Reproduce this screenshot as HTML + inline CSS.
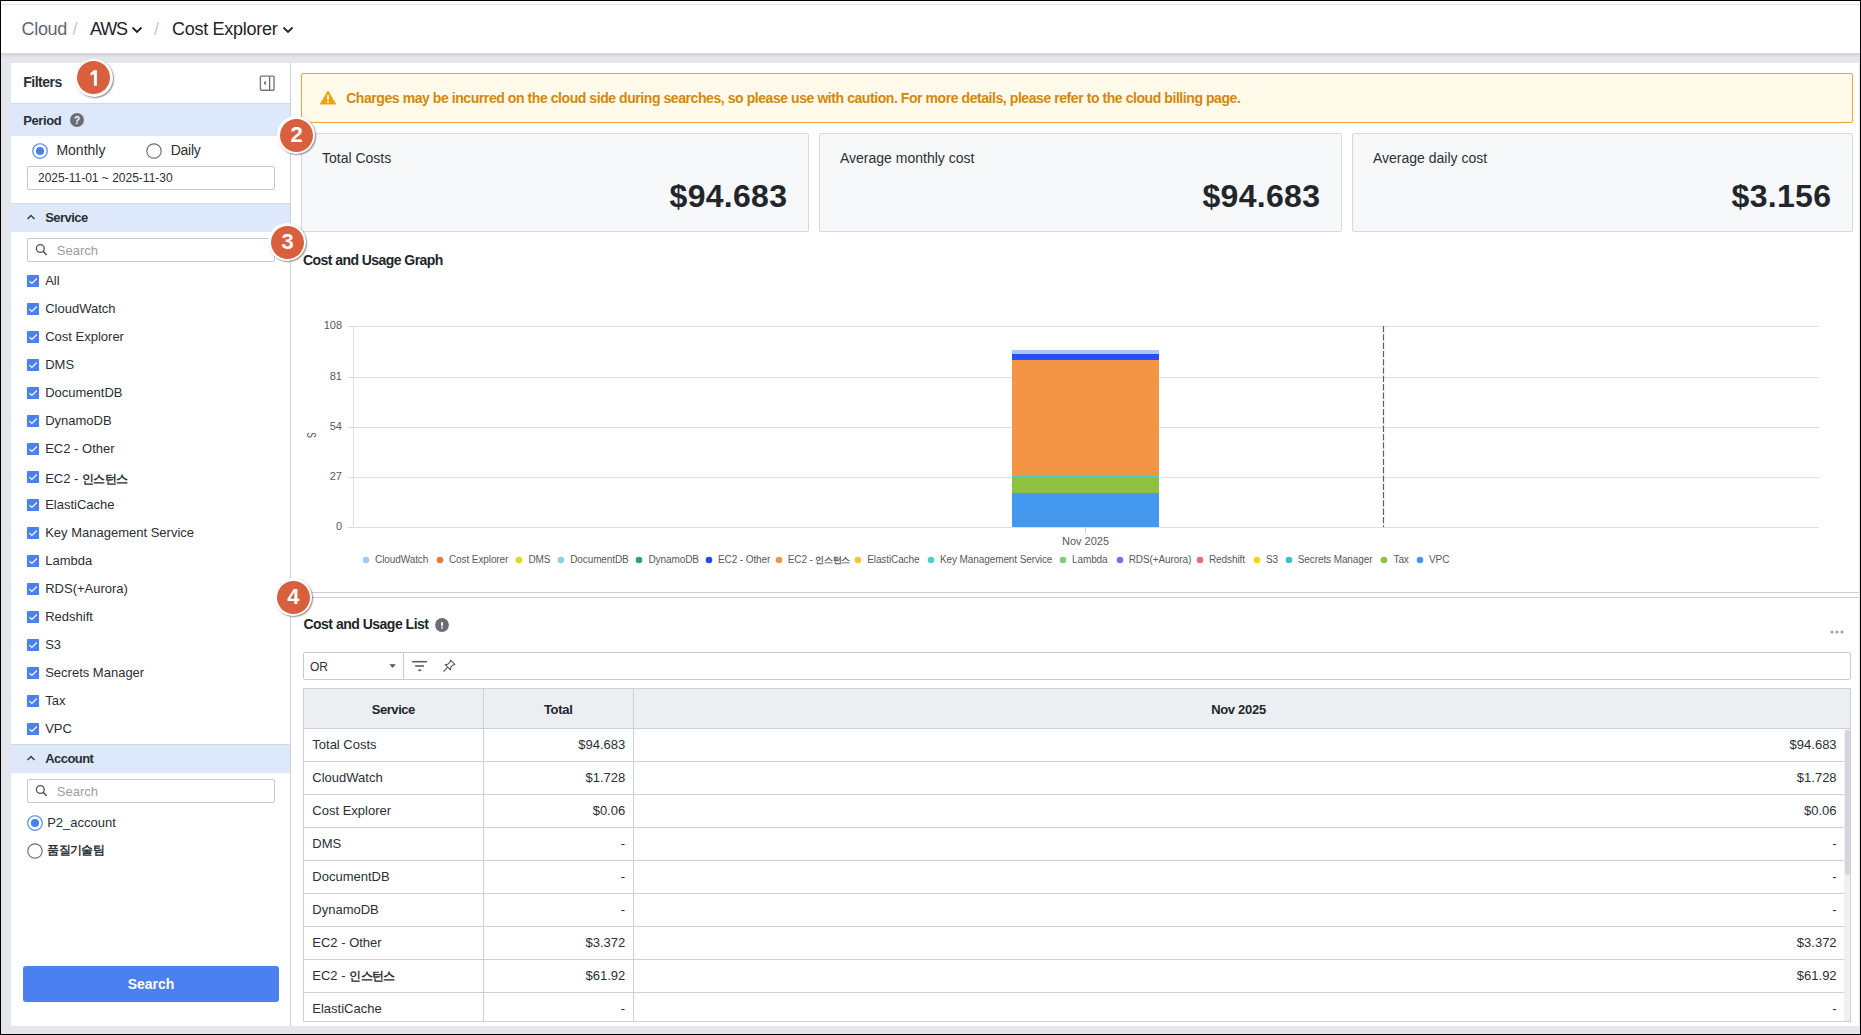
<!DOCTYPE html>
<html><head><meta charset="utf-8"><style>
html,body{margin:0;padding:0;width:1861px;height:1035px;overflow:hidden;background:#e3e6ea;}
body{position:relative;font-family:"Liberation Sans", sans-serif;}
.t{position:absolute;white-space:nowrap;font-family:"Liberation Sans", sans-serif;}
.ko{font-size:11.5px;font-weight:700;letter-spacing:-0.6px;}
svg{display:block;overflow:visible;}
</style></head><body>
<div style="position:absolute;left:0px;top:0px;width:1861px;height:1035px;box-sizing:border-box;background:#e3e6ea;"></div>
<div style="position:absolute;left:1px;top:1px;width:1859px;height:52px;box-sizing:border-box;background:#fff;"></div>
<div style="position:absolute;left:1px;top:4px;width:1859px;height:1px;box-sizing:border-box;background:#e3e5e6;"></div>
<div style="position:absolute;left:1px;top:53px;width:1859px;height:5px;box-sizing:border-box;background:linear-gradient(#cfd3d8,#e3e6ea);"></div>
<div class="t" style="left:21.60px;top:19.56px;font-size:18px;line-height:18px;color:#5f6775;font-weight:400;letter-spacing:-0.35px;">Cloud</div>
<div class="t" style="left:72.50px;top:19.56px;font-size:18px;line-height:18px;color:#c3c8cf;font-weight:400;">/</div>
<div class="t" style="left:90.10px;top:19.56px;font-size:18px;line-height:18px;color:#1f2329;font-weight:400;letter-spacing:-1.2px;">AWS</div>
<svg style="position:absolute;left:131px;top:25.5px;" width="12" height="8" viewBox="0 0 12 8"><path d="M1.5 1.5 L6 6 L10.5 1.5" fill="none" stroke="#1f2329" stroke-width="1.8"/></svg>
<div class="t" style="left:154.00px;top:19.56px;font-size:18px;line-height:18px;color:#c3c8cf;font-weight:400;">/</div>
<div class="t" style="left:172.00px;top:19.56px;font-size:18px;line-height:18px;color:#1f2329;font-weight:400;letter-spacing:-0.28px;">Cost Explorer</div>
<svg style="position:absolute;left:282px;top:25.5px;" width="12" height="8" viewBox="0 0 12 8"><path d="M1.5 1.5 L6 6 L10.5 1.5" fill="none" stroke="#1f2329" stroke-width="1.8"/></svg>
<div style="position:absolute;left:11px;top:63px;width:280px;height:963px;box-sizing:border-box;background:#fff;border-right:1px solid #cfd3d9;"></div>
<div class="t" style="left:23.20px;top:75.45px;font-size:14px;line-height:14px;color:#2b2f36;font-weight:700;letter-spacing:-0.5px;">Filters</div>
<div style="position:absolute;left:11px;top:103px;width:279px;height:1px;box-sizing:border-box;background:#d5d9de;"></div>
<svg style="position:absolute;left:258px;top:74px;" width="18" height="18" viewBox="0 0 18 18"><rect x="2.4" y="2.1" width="13.6" height="14.1" rx="0.9" fill="none" stroke="#737881" stroke-width="1.4"/><line x1="11.6" y1="2.5" x2="11.6" y2="15.8" stroke="#626770" stroke-width="1.3"/><path d="M7.8 6.6 L5.6 9 L7.8 11.4 Z" fill="#5a5f68"/></svg>
<div style="position:absolute;left:11px;top:104px;width:279px;height:32px;box-sizing:border-box;background:#dde8fb;"></div>
<div class="t" style="left:23.20px;top:113.70px;font-size:13px;line-height:13px;color:#2b2f36;font-weight:700;letter-spacing:-0.4px;">Period</div>
<svg style="position:absolute;left:70px;top:113px;" width="14" height="14" viewBox="0 0 14 14"><circle cx="7" cy="7" r="7" fill="#6b6e75"/><text x="7" y="11" text-anchor="middle" font-family="Liberation Sans" font-weight="700" font-size="10" fill="#fff">?</text></svg>
<svg style="position:absolute;left:32px;top:143px;" width="16" height="16" viewBox="0 0 16 16"><circle cx="8" cy="8" r="7.3" fill="#fff" stroke="#4a80f2" stroke-width="1.15"/><circle cx="8" cy="8" r="4.1" fill="#4a80f2"/></svg>
<div class="t" style="left:56.40px;top:143.15px;font-size:14px;line-height:14px;color:#2b2f36;font-weight:400;">Monthly</div>
<svg style="position:absolute;left:145.7px;top:143px;" width="16" height="16" viewBox="0 0 16 16"><circle cx="8" cy="8" r="7.2" fill="#fff" stroke="#6b7078" stroke-width="1.2"/></svg>
<div class="t" style="left:170.80px;top:143.15px;font-size:14px;line-height:14px;color:#2b2f36;font-weight:400;letter-spacing:-0.3px;">Daily</div>
<div style="position:absolute;left:27px;top:166px;width:248px;height:24px;box-sizing:border-box;border:1px solid #c5c9cf;border-radius:2px;background:#fff;"></div>
<div class="t" style="left:38.00px;top:171.74px;font-size:12px;line-height:12px;color:#2b2f36;font-weight:400;">2025-11-01 ~ 2025-11-30</div>
<div style="position:absolute;left:11px;top:203px;width:279px;height:1px;box-sizing:border-box;background:#d5d9de;"></div>
<div style="position:absolute;left:11px;top:204px;width:279px;height:28px;box-sizing:border-box;background:#dde8fb;"></div>
<svg style="position:absolute;left:26px;top:213px;" width="10" height="8" viewBox="0 0 10 8"><path d="M1.5 6 L5 2.5 L8.5 6" fill="none" stroke="#3a3f47" stroke-width="1.5"/></svg>
<div class="t" style="left:45.20px;top:211.30px;font-size:13px;line-height:13px;color:#2b2f36;font-weight:700;letter-spacing:-0.55px;">Service</div>
<div style="position:absolute;left:27px;top:238px;width:248px;height:24px;box-sizing:border-box;border:1px solid #c5c9cf;border-radius:2px;background:#fff;"></div>
<svg style="position:absolute;left:34px;top:243.0px;" width="14" height="14" viewBox="0 0 14 14"><circle cx="6.3" cy="5.5" r="3.9" fill="none" stroke="#50555c" stroke-width="1.35"/><line x1="9.1" y1="8.3" x2="12.6" y2="12" stroke="#50555c" stroke-width="1.6"/></svg>
<div class="t" style="left:56.80px;top:243.60px;font-size:13px;line-height:13px;color:#9a9ea5;font-weight:400;">Search</div>
<svg style="position:absolute;left:27px;top:275px;" width="12" height="12" viewBox="0 0 12 12"><rect x="0" y="0" width="12" height="12" rx="0.4" fill="#4a80f0"/><path d="M2.3 6.1 L4.9 8.5 L9.8 3.5" fill="none" stroke="#fff" stroke-width="1.15"/></svg>
<div class="t" style="left:45.20px;top:274.20px;font-size:13px;line-height:13px;color:#2b2f36;font-weight:400;">All</div>
<svg style="position:absolute;left:27px;top:303px;" width="12" height="12" viewBox="0 0 12 12"><rect x="0" y="0" width="12" height="12" rx="0.4" fill="#4a80f0"/><path d="M2.3 6.1 L4.9 8.5 L9.8 3.5" fill="none" stroke="#fff" stroke-width="1.15"/></svg>
<div class="t" style="left:45.20px;top:302.20px;font-size:13px;line-height:13px;color:#2b2f36;font-weight:400;">CloudWatch</div>
<svg style="position:absolute;left:27px;top:331px;" width="12" height="12" viewBox="0 0 12 12"><rect x="0" y="0" width="12" height="12" rx="0.4" fill="#4a80f0"/><path d="M2.3 6.1 L4.9 8.5 L9.8 3.5" fill="none" stroke="#fff" stroke-width="1.15"/></svg>
<div class="t" style="left:45.20px;top:330.20px;font-size:13px;line-height:13px;color:#2b2f36;font-weight:400;">Cost Explorer</div>
<svg style="position:absolute;left:27px;top:359px;" width="12" height="12" viewBox="0 0 12 12"><rect x="0" y="0" width="12" height="12" rx="0.4" fill="#4a80f0"/><path d="M2.3 6.1 L4.9 8.5 L9.8 3.5" fill="none" stroke="#fff" stroke-width="1.15"/></svg>
<div class="t" style="left:45.20px;top:358.20px;font-size:13px;line-height:13px;color:#2b2f36;font-weight:400;">DMS</div>
<svg style="position:absolute;left:27px;top:387px;" width="12" height="12" viewBox="0 0 12 12"><rect x="0" y="0" width="12" height="12" rx="0.4" fill="#4a80f0"/><path d="M2.3 6.1 L4.9 8.5 L9.8 3.5" fill="none" stroke="#fff" stroke-width="1.15"/></svg>
<div class="t" style="left:45.20px;top:386.20px;font-size:13px;line-height:13px;color:#2b2f36;font-weight:400;">DocumentDB</div>
<svg style="position:absolute;left:27px;top:415px;" width="12" height="12" viewBox="0 0 12 12"><rect x="0" y="0" width="12" height="12" rx="0.4" fill="#4a80f0"/><path d="M2.3 6.1 L4.9 8.5 L9.8 3.5" fill="none" stroke="#fff" stroke-width="1.15"/></svg>
<div class="t" style="left:45.20px;top:414.20px;font-size:13px;line-height:13px;color:#2b2f36;font-weight:400;">DynamoDB</div>
<svg style="position:absolute;left:27px;top:443px;" width="12" height="12" viewBox="0 0 12 12"><rect x="0" y="0" width="12" height="12" rx="0.4" fill="#4a80f0"/><path d="M2.3 6.1 L4.9 8.5 L9.8 3.5" fill="none" stroke="#fff" stroke-width="1.15"/></svg>
<div class="t" style="left:45.20px;top:442.20px;font-size:13px;line-height:13px;color:#2b2f36;font-weight:400;">EC2 - Other</div>
<svg style="position:absolute;left:27px;top:471px;" width="12" height="12" viewBox="0 0 12 12"><rect x="0" y="0" width="12" height="12" rx="0.4" fill="#4a80f0"/><path d="M2.3 6.1 L4.9 8.5 L9.8 3.5" fill="none" stroke="#fff" stroke-width="1.15"/></svg>
<div class="t" style="left:45.20px;top:471.70px;font-size:13px;line-height:13px;color:#2b2f36;font-weight:400;">EC2 - <span class="ko">인스턴스</span></div>
<svg style="position:absolute;left:27px;top:499px;" width="12" height="12" viewBox="0 0 12 12"><rect x="0" y="0" width="12" height="12" rx="0.4" fill="#4a80f0"/><path d="M2.3 6.1 L4.9 8.5 L9.8 3.5" fill="none" stroke="#fff" stroke-width="1.15"/></svg>
<div class="t" style="left:45.20px;top:498.20px;font-size:13px;line-height:13px;color:#2b2f36;font-weight:400;">ElastiCache</div>
<svg style="position:absolute;left:27px;top:527px;" width="12" height="12" viewBox="0 0 12 12"><rect x="0" y="0" width="12" height="12" rx="0.4" fill="#4a80f0"/><path d="M2.3 6.1 L4.9 8.5 L9.8 3.5" fill="none" stroke="#fff" stroke-width="1.15"/></svg>
<div class="t" style="left:45.20px;top:526.20px;font-size:13px;line-height:13px;color:#2b2f36;font-weight:400;">Key Management Service</div>
<svg style="position:absolute;left:27px;top:555px;" width="12" height="12" viewBox="0 0 12 12"><rect x="0" y="0" width="12" height="12" rx="0.4" fill="#4a80f0"/><path d="M2.3 6.1 L4.9 8.5 L9.8 3.5" fill="none" stroke="#fff" stroke-width="1.15"/></svg>
<div class="t" style="left:45.20px;top:554.20px;font-size:13px;line-height:13px;color:#2b2f36;font-weight:400;">Lambda</div>
<svg style="position:absolute;left:27px;top:583px;" width="12" height="12" viewBox="0 0 12 12"><rect x="0" y="0" width="12" height="12" rx="0.4" fill="#4a80f0"/><path d="M2.3 6.1 L4.9 8.5 L9.8 3.5" fill="none" stroke="#fff" stroke-width="1.15"/></svg>
<div class="t" style="left:45.20px;top:582.20px;font-size:13px;line-height:13px;color:#2b2f36;font-weight:400;">RDS(+Aurora)</div>
<svg style="position:absolute;left:27px;top:611px;" width="12" height="12" viewBox="0 0 12 12"><rect x="0" y="0" width="12" height="12" rx="0.4" fill="#4a80f0"/><path d="M2.3 6.1 L4.9 8.5 L9.8 3.5" fill="none" stroke="#fff" stroke-width="1.15"/></svg>
<div class="t" style="left:45.20px;top:610.20px;font-size:13px;line-height:13px;color:#2b2f36;font-weight:400;">Redshift</div>
<svg style="position:absolute;left:27px;top:639px;" width="12" height="12" viewBox="0 0 12 12"><rect x="0" y="0" width="12" height="12" rx="0.4" fill="#4a80f0"/><path d="M2.3 6.1 L4.9 8.5 L9.8 3.5" fill="none" stroke="#fff" stroke-width="1.15"/></svg>
<div class="t" style="left:45.20px;top:638.20px;font-size:13px;line-height:13px;color:#2b2f36;font-weight:400;">S3</div>
<svg style="position:absolute;left:27px;top:667px;" width="12" height="12" viewBox="0 0 12 12"><rect x="0" y="0" width="12" height="12" rx="0.4" fill="#4a80f0"/><path d="M2.3 6.1 L4.9 8.5 L9.8 3.5" fill="none" stroke="#fff" stroke-width="1.15"/></svg>
<div class="t" style="left:45.20px;top:666.20px;font-size:13px;line-height:13px;color:#2b2f36;font-weight:400;">Secrets Manager</div>
<svg style="position:absolute;left:27px;top:695px;" width="12" height="12" viewBox="0 0 12 12"><rect x="0" y="0" width="12" height="12" rx="0.4" fill="#4a80f0"/><path d="M2.3 6.1 L4.9 8.5 L9.8 3.5" fill="none" stroke="#fff" stroke-width="1.15"/></svg>
<div class="t" style="left:45.20px;top:694.20px;font-size:13px;line-height:13px;color:#2b2f36;font-weight:400;">Tax</div>
<svg style="position:absolute;left:27px;top:723px;" width="12" height="12" viewBox="0 0 12 12"><rect x="0" y="0" width="12" height="12" rx="0.4" fill="#4a80f0"/><path d="M2.3 6.1 L4.9 8.5 L9.8 3.5" fill="none" stroke="#fff" stroke-width="1.15"/></svg>
<div class="t" style="left:45.20px;top:722.20px;font-size:13px;line-height:13px;color:#2b2f36;font-weight:400;">VPC</div>
<div style="position:absolute;left:11px;top:744px;width:279px;height:1px;box-sizing:border-box;background:#d5d9de;"></div>
<div style="position:absolute;left:11px;top:745px;width:279px;height:28px;box-sizing:border-box;background:#dde8fb;"></div>
<svg style="position:absolute;left:26px;top:754px;" width="10" height="8" viewBox="0 0 10 8"><path d="M1.5 6 L5 2.5 L8.5 6" fill="none" stroke="#3a3f47" stroke-width="1.5"/></svg>
<div class="t" style="left:45.20px;top:752.10px;font-size:13px;line-height:13px;color:#2b2f36;font-weight:700;letter-spacing:-0.55px;">Account</div>
<div style="position:absolute;left:27px;top:779px;width:248px;height:24px;box-sizing:border-box;border:1px solid #c5c9cf;border-radius:2px;background:#fff;"></div>
<svg style="position:absolute;left:34px;top:784.0px;" width="14" height="14" viewBox="0 0 14 14"><circle cx="6.3" cy="5.5" r="3.9" fill="none" stroke="#50555c" stroke-width="1.35"/><line x1="9.1" y1="8.3" x2="12.6" y2="12" stroke="#50555c" stroke-width="1.6"/></svg>
<div class="t" style="left:56.80px;top:784.60px;font-size:13px;line-height:13px;color:#9a9ea5;font-weight:400;">Search</div>
<svg style="position:absolute;left:27px;top:815px;" width="16" height="16" viewBox="0 0 16 16"><circle cx="8" cy="8" r="7.3" fill="#fff" stroke="#4a80f2" stroke-width="1.15"/><circle cx="8" cy="8" r="4.1" fill="#4a80f2"/></svg>
<div class="t" style="left:47.20px;top:815.80px;font-size:13px;line-height:13px;color:#2b2f36;font-weight:400;">P2_account</div>
<svg style="position:absolute;left:27px;top:843px;" width="16" height="16" viewBox="0 0 16 16"><circle cx="8" cy="8" r="7.2" fill="#fff" stroke="#6b7078" stroke-width="1.2"/></svg>
<div class="t" style="left:47.20px;top:843.00px;font-size:13px;line-height:13px;color:#2b2f36;font-weight:400;"><span class="ko">품질기술팀</span></div>
<div style="position:absolute;left:23px;top:966px;width:256px;height:36px;box-sizing:border-box;background:#4a80f0;border-radius:3px;"></div>
<div class="t" style="left:-449.00px;width:1200px;text-align:center;top:977.15px;font-size:14px;line-height:14px;color:#fff;font-weight:700;">Search</div>
<div style="position:absolute;left:291px;top:63px;width:1568px;height:963px;box-sizing:border-box;background:#fff;"></div>
<div style="position:absolute;left:301px;top:73px;width:1552px;height:50px;box-sizing:border-box;background:#fffaea;border:1px solid #f0a52e;border-radius:2px;"></div>
<svg style="position:absolute;left:320px;top:90px;" width="16" height="15" viewBox="0 0 16 15"><path d="M8 1 L15.5 14 L0.5 14 Z" fill="#f0a010" stroke="#f0a010" stroke-width="1" stroke-linejoin="round"/><rect x="7.1" y="5" width="1.8" height="5" fill="#fff"/><rect x="7.1" y="11" width="1.8" height="1.8" fill="#fff"/></svg>
<div class="t" style="left:346.20px;top:91.45px;font-size:14px;line-height:14px;color:#d4870c;font-weight:700;letter-spacing:-0.43px;">Charges may be incurred on the cloud side during searches, so please use with caution. For more details, please refer to the cloud billing page.</div>
<div style="position:absolute;left:301px;top:133px;width:508px;height:99px;box-sizing:border-box;background:#f7f8fa;border:1px solid #d6d9de;border-radius:2px;"></div>
<div class="t" style="left:322.00px;top:151.15px;font-size:14px;line-height:14px;color:#2b2f36;font-weight:400;">Total Costs</div>
<div class="t" style="left:-412.70px;width:1200px;text-align:right;top:179.51px;font-size:32px;line-height:32px;color:#22262c;font-weight:700;letter-spacing:0.3px;">$94.683</div>
<div style="position:absolute;left:819px;top:133px;width:523px;height:99px;box-sizing:border-box;background:#f7f8fa;border:1px solid #d6d9de;border-radius:2px;"></div>
<div class="t" style="left:840.00px;top:151.15px;font-size:14px;line-height:14px;color:#2b2f36;font-weight:400;">Average monthly cost</div>
<div class="t" style="left:120.30px;width:1200px;text-align:right;top:179.51px;font-size:32px;line-height:32px;color:#22262c;font-weight:700;letter-spacing:0.3px;">$94.683</div>
<div style="position:absolute;left:1352px;top:133px;width:501px;height:99px;box-sizing:border-box;background:#f7f8fa;border:1px solid #d6d9de;border-radius:2px;"></div>
<div class="t" style="left:1373.00px;top:151.15px;font-size:14px;line-height:14px;color:#2b2f36;font-weight:400;">Average daily cost</div>
<div class="t" style="left:631.30px;width:1200px;text-align:right;top:179.51px;font-size:32px;line-height:32px;color:#22262c;font-weight:700;letter-spacing:0.3px;">$3.156</div>
<div class="t" style="left:302.90px;top:253.35px;font-size:14px;line-height:14px;color:#22262c;font-weight:700;letter-spacing:-0.55px;">Cost and Usage Graph</div>
<div style="position:absolute;left:347px;top:326px;width:1472px;height:1px;box-sizing:border-box;background:#dcdfe3;"></div>
<div class="t" style="left:-858.00px;width:1200px;text-align:right;top:320.49px;font-size:11px;line-height:11px;color:#555a61;font-weight:400;">108</div>
<div style="position:absolute;left:347px;top:377px;width:1472px;height:1px;box-sizing:border-box;background:#dcdfe3;"></div>
<div class="t" style="left:-858.00px;width:1200px;text-align:right;top:371.49px;font-size:11px;line-height:11px;color:#555a61;font-weight:400;">81</div>
<div style="position:absolute;left:347px;top:427px;width:1472px;height:1px;box-sizing:border-box;background:#dcdfe3;"></div>
<div class="t" style="left:-858.00px;width:1200px;text-align:right;top:421.49px;font-size:11px;line-height:11px;color:#555a61;font-weight:400;">54</div>
<div style="position:absolute;left:347px;top:477px;width:1472px;height:1px;box-sizing:border-box;background:#dcdfe3;"></div>
<div class="t" style="left:-858.00px;width:1200px;text-align:right;top:471.49px;font-size:11px;line-height:11px;color:#555a61;font-weight:400;">27</div>
<div style="position:absolute;left:347px;top:527px;width:1472px;height:1px;box-sizing:border-box;background:#dcdfe3;"></div>
<div class="t" style="left:-858.00px;width:1200px;text-align:right;top:521.49px;font-size:11px;line-height:11px;color:#555a61;font-weight:400;">0</div>
<div style="position:absolute;left:353px;top:326px;width:1px;height:201px;box-sizing:border-box;background:#dcdfe3;"></div>
<div class="t" style="left:303.5px;top:429px;width:14px;height:12px;font-size:12px;line-height:12px;text-align:center;color:#4a4f56;transform:rotate(90deg) scaleX(0.7);">S</div>
<div style="position:absolute;left:1012px;top:350px;width:147px;height:4.00px;background:#a3c8f5;"></div>
<div style="position:absolute;left:1012px;top:354px;width:147px;height:6.00px;background:#2450f5;"></div>
<div style="position:absolute;left:1012px;top:360px;width:147px;height:114.60px;background:#f39545;"></div>
<div style="position:absolute;left:1012px;top:474.6px;width:147px;height:2.40px;background:#4fcfc6;"></div>
<div style="position:absolute;left:1012px;top:477px;width:147px;height:16.00px;background:#8dc13f;"></div>
<div style="position:absolute;left:1012px;top:493px;width:147px;height:34.00px;background:#4598f0;"></div>
<div style="position:absolute;left:1085px;top:527px;width:1px;height:6px;box-sizing:border-box;background:#cfd3d8;"></div>
<div class="t" style="left:485.50px;width:1200px;text-align:center;top:535.99px;font-size:11px;line-height:11px;color:#555a61;font-weight:400;">Nov 2025</div>
<svg style="position:absolute;left:1382px;top:326px;" width="3" height="201" viewBox="0 0 3 201"><line x1="1.5" y1="0" x2="1.5" y2="201" stroke="#5a5f68" stroke-width="1.2" stroke-dasharray="6.3 2"/></svg>
<svg style="position:absolute;left:361.7px;top:556px;" width="8" height="8" viewBox="0 0 8 8"><circle cx="4" cy="4" r="3.3" fill="#a3c8f5"/></svg>
<div class="t" style="left:375.10px;top:555.13px;font-size:10px;line-height:10px;color:#555a61;font-weight:400;letter-spacing:-0.1px;">CloudWatch</div>
<svg style="position:absolute;left:435.8px;top:556px;" width="8" height="8" viewBox="0 0 8 8"><circle cx="4" cy="4" r="3.3" fill="#f5763a"/></svg>
<div class="t" style="left:449.00px;top:555.13px;font-size:10px;line-height:10px;color:#555a61;font-weight:400;letter-spacing:-0.1px;">Cost Explorer</div>
<svg style="position:absolute;left:514.8px;top:556px;" width="8" height="8" viewBox="0 0 8 8"><circle cx="4" cy="4" r="3.3" fill="#d8dc10"/></svg>
<div class="t" style="left:528.50px;top:555.13px;font-size:10px;line-height:10px;color:#555a61;font-weight:400;letter-spacing:-0.1px;">DMS</div>
<svg style="position:absolute;left:556.7px;top:556px;" width="8" height="8" viewBox="0 0 8 8"><circle cx="4" cy="4" r="3.3" fill="#8dd0e2"/></svg>
<div class="t" style="left:570.20px;top:555.13px;font-size:10px;line-height:10px;color:#555a61;font-weight:400;letter-spacing:-0.1px;">DocumentDB</div>
<svg style="position:absolute;left:634.7px;top:556px;" width="8" height="8" viewBox="0 0 8 8"><circle cx="4" cy="4" r="3.3" fill="#2f9e85"/></svg>
<div class="t" style="left:648.50px;top:555.13px;font-size:10px;line-height:10px;color:#555a61;font-weight:400;letter-spacing:-0.1px;">DynamoDB</div>
<svg style="position:absolute;left:704.8px;top:556px;" width="8" height="8" viewBox="0 0 8 8"><circle cx="4" cy="4" r="3.3" fill="#2448f5"/></svg>
<div class="t" style="left:718.00px;top:555.13px;font-size:10px;line-height:10px;color:#555a61;font-weight:400;letter-spacing:-0.1px;">EC2 - Other</div>
<svg style="position:absolute;left:774.6px;top:556px;" width="8" height="8" viewBox="0 0 8 8"><circle cx="4" cy="4" r="3.3" fill="#f39545"/></svg>
<div class="t" style="left:787.70px;top:555.13px;font-size:10px;line-height:10px;color:#555a61;font-weight:400;letter-spacing:-0.1px;">EC2 - <span style="font-size:9px;font-weight:700;letter-spacing:-0.4px">인스턴스</span></div>
<svg style="position:absolute;left:853.7px;top:556px;" width="8" height="8" viewBox="0 0 8 8"><circle cx="4" cy="4" r="3.3" fill="#f7c33a"/></svg>
<div class="t" style="left:867.20px;top:555.13px;font-size:10px;line-height:10px;color:#555a61;font-weight:400;letter-spacing:-0.1px;">ElastiCache</div>
<svg style="position:absolute;left:927px;top:556px;" width="8" height="8" viewBox="0 0 8 8"><circle cx="4" cy="4" r="3.3" fill="#4fcfc6"/></svg>
<div class="t" style="left:940.00px;top:555.13px;font-size:10px;line-height:10px;color:#555a61;font-weight:400;letter-spacing:-0.1px;">Key Management Service</div>
<svg style="position:absolute;left:1058.8px;top:556px;" width="8" height="8" viewBox="0 0 8 8"><circle cx="4" cy="4" r="3.3" fill="#7ccb7c"/></svg>
<div class="t" style="left:1072.00px;top:555.13px;font-size:10px;line-height:10px;color:#555a61;font-weight:400;letter-spacing:-0.1px;">Lambda</div>
<svg style="position:absolute;left:1115.7px;top:556px;" width="8" height="8" viewBox="0 0 8 8"><circle cx="4" cy="4" r="3.3" fill="#7c6cf0"/></svg>
<div class="t" style="left:1128.70px;top:555.13px;font-size:10px;line-height:10px;color:#555a61;font-weight:400;letter-spacing:-0.1px;">RDS(+Aurora)</div>
<svg style="position:absolute;left:1195.7px;top:556px;" width="8" height="8" viewBox="0 0 8 8"><circle cx="4" cy="4" r="3.3" fill="#f06870"/></svg>
<div class="t" style="left:1209.00px;top:555.13px;font-size:10px;line-height:10px;color:#555a61;font-weight:400;letter-spacing:-0.1px;">Redshift</div>
<svg style="position:absolute;left:1252.9px;top:556px;" width="8" height="8" viewBox="0 0 8 8"><circle cx="4" cy="4" r="3.3" fill="#f7d800"/></svg>
<div class="t" style="left:1266.00px;top:555.13px;font-size:10px;line-height:10px;color:#555a61;font-weight:400;letter-spacing:-0.1px;">S3</div>
<svg style="position:absolute;left:1284.8px;top:556px;" width="8" height="8" viewBox="0 0 8 8"><circle cx="4" cy="4" r="3.3" fill="#3cbfcf"/></svg>
<div class="t" style="left:1297.80px;top:555.13px;font-size:10px;line-height:10px;color:#555a61;font-weight:400;letter-spacing:-0.1px;">Secrets Manager</div>
<svg style="position:absolute;left:1379.6px;top:556px;" width="8" height="8" viewBox="0 0 8 8"><circle cx="4" cy="4" r="3.3" fill="#8dc13f"/></svg>
<div class="t" style="left:1393.50px;top:555.13px;font-size:10px;line-height:10px;color:#555a61;font-weight:400;letter-spacing:-0.1px;">Tax</div>
<svg style="position:absolute;left:1415.7px;top:556px;" width="8" height="8" viewBox="0 0 8 8"><circle cx="4" cy="4" r="3.3" fill="#4598f0"/></svg>
<div class="t" style="left:1429.00px;top:555.13px;font-size:10px;line-height:10px;color:#555a61;font-weight:400;letter-spacing:-0.1px;">VPC</div>
<div style="position:absolute;left:291px;top:592px;width:1568px;height:1px;box-sizing:border-box;background:#cdd1d7;"></div>
<div style="position:absolute;left:291px;top:597px;width:1568px;height:1px;box-sizing:border-box;background:#cdd1d7;"></div>
<div class="t" style="left:303.40px;top:617.35px;font-size:14px;line-height:14px;color:#22262c;font-weight:700;letter-spacing:-0.5px;">Cost and Usage List</div>
<svg style="position:absolute;left:435px;top:618px;" width="14" height="14" viewBox="0 0 14 14"><circle cx="7" cy="7" r="6.9" fill="#6b6e75"/><rect x="6" y="3.9" width="2" height="4.3" rx="0.3" fill="#e8e9eb"/><rect x="6" y="9.1" width="2" height="1.5" rx="0.3" fill="#e8e9eb"/></svg>
<svg style="position:absolute;left:1829px;top:629px;" width="16" height="6" viewBox="0 0 16 6"><circle cx="3" cy="3" r="1.5" fill="#9a9ea5"/><circle cx="8" cy="3" r="1.5" fill="#9a9ea5"/><circle cx="13" cy="3" r="1.5" fill="#9a9ea5"/></svg>
<div style="position:absolute;left:303px;top:652px;width:1548px;height:28px;box-sizing:border-box;border:1px solid #c8ccd2;border-radius:2px;background:#fff;"></div>
<div style="position:absolute;left:403px;top:653px;width:1px;height:26px;box-sizing:border-box;background:#c8ccd2;"></div>
<div class="t" style="left:310.00px;top:661.14px;font-size:12px;line-height:12px;color:#2b2f36;font-weight:400;">OR</div>
<svg style="position:absolute;left:388.5px;top:664px;" width="8" height="4" viewBox="0 0 8 4"><path d="M0.3 0.3 L6.9 0.3 L3.6 3.7 Z" fill="#50555c"/></svg>
<svg style="position:absolute;left:411px;top:659px;" width="16" height="14" viewBox="0 0 16 14"><line x1="1.2" y1="2.7" x2="16" y2="2.7" stroke="#5a5f66" stroke-width="1.6"/><line x1="4.2" y1="7" x2="13" y2="7" stroke="#5a5f66" stroke-width="1.6"/><line x1="7.2" y1="11.3" x2="10.2" y2="11.3" stroke="#5a5f66" stroke-width="1.6"/></svg>
<svg style="position:absolute;left:442px;top:659px;" width="14" height="14" viewBox="0 0 14 14"><path d="M8.6 1.2 L12.8 5.4 L11.2 5.8 L8.6 8.4 L8.4 10.8 L3.2 5.6 L5.6 5.4 L8.2 2.8 Z" fill="none" stroke="#5a5f66" stroke-width="1.2" stroke-linejoin="round"/><line x1="5.6" y1="8.4" x2="1.4" y2="12.6" stroke="#5a5f66" stroke-width="1.2"/></svg>
<div style="position:absolute;left:303px;top:688px;width:1548px;height:334px;box-sizing:border-box;border:1px solid #cdd1d7;background:#fff;"></div>
<div style="position:absolute;left:304px;top:689px;width:1546px;height:39px;box-sizing:border-box;background:#eceff2;"></div>
<div style="position:absolute;left:304px;top:728px;width:1546px;height:1px;box-sizing:border-box;background:#cdd1d7;"></div>
<div style="position:absolute;left:483px;top:689px;width:1px;height:332px;box-sizing:border-box;background:#cdd1d7;"></div>
<div style="position:absolute;left:633px;top:689px;width:1px;height:332px;box-sizing:border-box;background:#cdd1d7;"></div>
<div class="t" style="left:-206.70px;width:1200px;text-align:center;top:702.60px;font-size:13px;line-height:13px;color:#22262c;font-weight:700;letter-spacing:-0.45px;">Service</div>
<div class="t" style="left:-41.80px;width:1200px;text-align:center;top:702.60px;font-size:13px;line-height:13px;color:#22262c;font-weight:700;letter-spacing:-0.3px;">Total</div>
<div class="t" style="left:638.50px;width:1200px;text-align:center;top:702.60px;font-size:13px;line-height:13px;color:#22262c;font-weight:700;letter-spacing:-0.3px;">Nov 2025</div>
<div style="position:absolute;left:304px;top:761px;width:1540px;height:1px;box-sizing:border-box;background:#cdd1d7;"></div>
<div class="t" style="left:312.30px;top:738.05px;font-size:13px;line-height:13px;color:#2b2f36;font-weight:400;">Total Costs</div>
<div class="t" style="left:-574.80px;width:1200px;text-align:right;top:738.05px;font-size:13px;line-height:13px;color:#2b2f36;font-weight:400;">$94.683</div>
<div class="t" style="left:636.60px;width:1200px;text-align:right;top:738.05px;font-size:13px;line-height:13px;color:#2b2f36;font-weight:400;">$94.683</div>
<div style="position:absolute;left:304px;top:794px;width:1540px;height:1px;box-sizing:border-box;background:#cdd1d7;"></div>
<div class="t" style="left:312.30px;top:770.95px;font-size:13px;line-height:13px;color:#2b2f36;font-weight:400;">CloudWatch</div>
<div class="t" style="left:-574.80px;width:1200px;text-align:right;top:770.95px;font-size:13px;line-height:13px;color:#2b2f36;font-weight:400;">$1.728</div>
<div class="t" style="left:636.60px;width:1200px;text-align:right;top:770.95px;font-size:13px;line-height:13px;color:#2b2f36;font-weight:400;">$1.728</div>
<div style="position:absolute;left:304px;top:827px;width:1540px;height:1px;box-sizing:border-box;background:#cdd1d7;"></div>
<div class="t" style="left:312.30px;top:803.85px;font-size:13px;line-height:13px;color:#2b2f36;font-weight:400;">Cost Explorer</div>
<div class="t" style="left:-574.80px;width:1200px;text-align:right;top:803.85px;font-size:13px;line-height:13px;color:#2b2f36;font-weight:400;">$0.06</div>
<div class="t" style="left:636.60px;width:1200px;text-align:right;top:803.85px;font-size:13px;line-height:13px;color:#2b2f36;font-weight:400;">$0.06</div>
<div style="position:absolute;left:304px;top:860px;width:1540px;height:1px;box-sizing:border-box;background:#cdd1d7;"></div>
<div class="t" style="left:312.30px;top:836.85px;font-size:13px;line-height:13px;color:#2b2f36;font-weight:400;">DMS</div>
<div class="t" style="left:-574.80px;width:1200px;text-align:right;top:836.85px;font-size:13px;line-height:13px;color:#2b2f36;font-weight:400;">-</div>
<div class="t" style="left:636.60px;width:1200px;text-align:right;top:836.85px;font-size:13px;line-height:13px;color:#2b2f36;font-weight:400;">-</div>
<div style="position:absolute;left:304px;top:893px;width:1540px;height:1px;box-sizing:border-box;background:#cdd1d7;"></div>
<div class="t" style="left:312.30px;top:869.85px;font-size:13px;line-height:13px;color:#2b2f36;font-weight:400;">DocumentDB</div>
<div class="t" style="left:-574.80px;width:1200px;text-align:right;top:869.85px;font-size:13px;line-height:13px;color:#2b2f36;font-weight:400;">-</div>
<div class="t" style="left:636.60px;width:1200px;text-align:right;top:869.85px;font-size:13px;line-height:13px;color:#2b2f36;font-weight:400;">-</div>
<div style="position:absolute;left:304px;top:926px;width:1540px;height:1px;box-sizing:border-box;background:#cdd1d7;"></div>
<div class="t" style="left:312.30px;top:902.85px;font-size:13px;line-height:13px;color:#2b2f36;font-weight:400;">DynamoDB</div>
<div class="t" style="left:-574.80px;width:1200px;text-align:right;top:902.85px;font-size:13px;line-height:13px;color:#2b2f36;font-weight:400;">-</div>
<div class="t" style="left:636.60px;width:1200px;text-align:right;top:902.85px;font-size:13px;line-height:13px;color:#2b2f36;font-weight:400;">-</div>
<div style="position:absolute;left:304px;top:959px;width:1540px;height:1px;box-sizing:border-box;background:#cdd1d7;"></div>
<div class="t" style="left:312.30px;top:935.90px;font-size:13px;line-height:13px;color:#2b2f36;font-weight:400;">EC2 - Other</div>
<div class="t" style="left:-574.80px;width:1200px;text-align:right;top:935.90px;font-size:13px;line-height:13px;color:#2b2f36;font-weight:400;">$3.372</div>
<div class="t" style="left:636.60px;width:1200px;text-align:right;top:935.90px;font-size:13px;line-height:13px;color:#2b2f36;font-weight:400;">$3.372</div>
<div style="position:absolute;left:304px;top:992px;width:1540px;height:1px;box-sizing:border-box;background:#cdd1d7;"></div>
<div class="t" style="left:312.30px;top:968.95px;font-size:13px;line-height:13px;color:#2b2f36;font-weight:400;">EC2 - <span class="ko">인스턴스</span></div>
<div class="t" style="left:-574.80px;width:1200px;text-align:right;top:968.95px;font-size:13px;line-height:13px;color:#2b2f36;font-weight:400;">$61.92</div>
<div class="t" style="left:636.60px;width:1200px;text-align:right;top:968.95px;font-size:13px;line-height:13px;color:#2b2f36;font-weight:400;">$61.92</div>
<div class="t" style="left:312.30px;top:1002.00px;font-size:13px;line-height:13px;color:#2b2f36;font-weight:400;">ElastiCache</div>
<div class="t" style="left:-574.80px;width:1200px;text-align:right;top:1002.00px;font-size:13px;line-height:13px;color:#2b2f36;font-weight:400;">-</div>
<div class="t" style="left:636.60px;width:1200px;text-align:right;top:1002.00px;font-size:13px;line-height:13px;color:#2b2f36;font-weight:400;">-</div>
<div style="position:absolute;left:1844px;top:729px;width:6px;height:292px;box-sizing:border-box;background:#eef0f3;"></div>
<div style="position:absolute;left:1844.5px;top:730px;width:5.0px;height:145px;box-sizing:border-box;background:#d3d6da;border-radius:2.5px;"></div>
<div style="position:absolute;left:74.7px;top:58.8px;width:38px;height:38px;border-radius:50%;background:#fff;box-shadow:1px 1px 1.5px rgba(0,0,0,0.45);"></div>
<div style="position:absolute;left:77.2px;top:61.3px;width:33px;height:33px;border-radius:50%;background:#d9603f;"></div>
<svg style="position:absolute;left:87.4px;top:69.39999999999999px;" width="16" height="18" viewBox="0 0 16 18"><path d="M6.9 1.3 L9.9 1.3 L9.9 16.7 L6.9 16.7 L6.9 5.2 L3.6 6.4 L3.6 3.9 Z" fill="#fff"/></svg>
<div style="position:absolute;left:277.4px;top:116.19999999999999px;width:38px;height:38px;border-radius:50%;background:#fff;box-shadow:1px 1px 1.5px rgba(0,0,0,0.45);"></div>
<div style="position:absolute;left:279.9px;top:118.69999999999999px;width:33px;height:33px;border-radius:50%;background:#d9603f;"></div>
<div class="t" style="left:-303.60px;width:1200px;text-align:center;top:124.38px;font-size:22px;line-height:22px;color:#fff;font-weight:700;letter-spacing:-0.5px;">2</div>
<div style="position:absolute;left:268.3px;top:223.2px;width:38px;height:38px;border-radius:50%;background:#fff;box-shadow:1px 1px 1.5px rgba(0,0,0,0.45);"></div>
<div style="position:absolute;left:270.8px;top:225.7px;width:33px;height:33px;border-radius:50%;background:#d9603f;"></div>
<div class="t" style="left:-312.70px;width:1200px;text-align:center;top:231.38px;font-size:22px;line-height:22px;color:#fff;font-weight:700;letter-spacing:-0.5px;">3</div>
<div style="position:absolute;left:274px;top:578.2px;width:38px;height:38px;border-radius:50%;background:#fff;box-shadow:1px 1px 1.5px rgba(0,0,0,0.45);"></div>
<div style="position:absolute;left:276.5px;top:580.7px;width:33px;height:33px;border-radius:50%;background:#d9603f;"></div>
<div class="t" style="left:-307.00px;width:1200px;text-align:center;top:586.38px;font-size:22px;line-height:22px;color:#fff;font-weight:700;letter-spacing:-0.5px;">4</div>
<div style="position:absolute;left:0px;top:0px;width:1861px;height:1px;box-sizing:border-box;background:#000;"></div>
<div style="position:absolute;left:0px;top:0px;width:1px;height:1035px;box-sizing:border-box;background:#000;"></div>
<div style="position:absolute;left:1860px;top:0px;width:1px;height:1035px;box-sizing:border-box;background:#000;"></div>
<div style="position:absolute;left:0px;top:1034px;width:1861px;height:1px;box-sizing:border-box;background:#000;"></div>
</body></html>
